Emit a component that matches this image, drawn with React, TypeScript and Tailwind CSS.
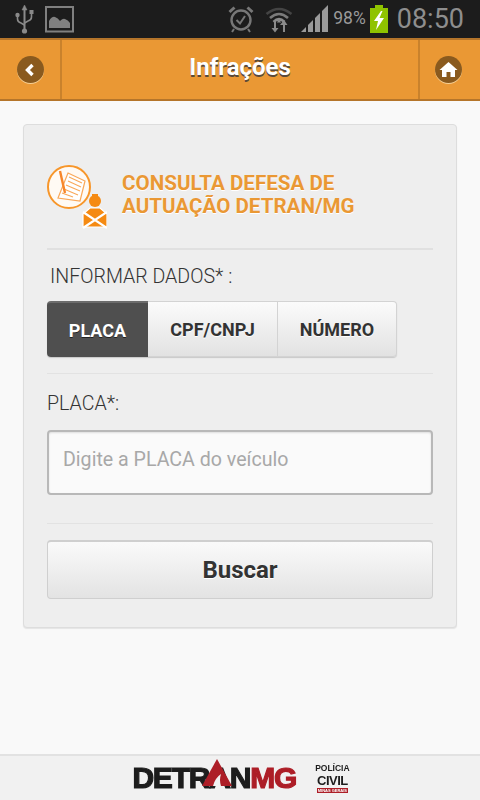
import React from "react";

const roboto = { fontFamily: "Roboto, sans-serif" };

function Usb() {
  return (
    <svg width="20" height="30" viewBox="0 0 20 30" className="shrink-0">
      <g fill="#8a8a8a" stroke="#8a8a8a">
        <path d="M9.5 1 L12 6 H7 Z" strokeWidth="0.5" />
        <path d="M9.5 5 V26" strokeWidth="2" fill="none" />
        <path d="M2.5 11 V15 Q2.5 18 6 19 L9.5 21" strokeWidth="1.6" fill="none" />
        <path d="M16.5 9 V13 Q16.5 16 13 17 L9.5 19" strokeWidth="1.6" fill="none" />
        <circle cx="2.5" cy="11" r="2.2" stroke="none" />
        <rect x="14.5" y="6" width="4" height="4" stroke="none" />
        <circle cx="9.5" cy="27" r="2.6" stroke="none" />
      </g>
    </svg>
  );
}

function Picture() {
  return (
    <svg width="30" height="27" viewBox="0 0 30 27" className="shrink-0">
      <rect x="1" y="1" width="27" height="24.5" fill="none" stroke="#808080" strokeWidth="2" />
      <path d="M4 22 V15 Q7 10 10 11 Q13 12 15 15 Q18 12 20 13 Q23 14 25 17 V22 Z" fill="#808080" />
    </svg>
  );
}

function Alarm() {
  return (
    <svg width="26" height="28" viewBox="0 0 26 28" fill="none" stroke="#777" className="shrink-0">
      <circle cx="13" cy="15" r="9.5" strokeWidth="2.4" />
      <path d="M8.5 15 L12 18.5 L17 11" strokeWidth="2" />
      <path d="M1.5 7 L6.5 2.5 M24.5 7 L19.5 2.5" strokeWidth="3" />
      <path d="M6 24 L4 27 M20 24 L22 27" strokeWidth="2" />
    </svg>
  );
}

function Wifi() {
  return (
    <svg width="28" height="28" viewBox="0 0 28 28" className="shrink-0">
      <g fill="none">
        <path d="M1.5 9 Q14 -1 26.500 9" stroke="#444" strokeWidth="2.6" />
        <path d="M5 13 Q14 5 23 13" stroke="#7a7a7a" strokeWidth="2.6" />
        <path d="M8.500 17 Q14 11.500 19.500 17" stroke="#8a8a8a" strokeWidth="2.6" />
      </g>
      <path d="M14 14.500 L11.800 17.500 H16.200 Z" fill="#8a8a8a" />
      <path d="M9 16 V23 H6.500 L10 27.500 L13.500 23 H11 V16 Z M18 27 V20 H15 L19 15 L22.500 20 H20 V27 Z" fill="#8a8a8a" />
    </svg>
  );
}

function Signal() {
  return (
    <svg width="28" height="28" viewBox="0 0 28 28" className="shrink-0">
      <path d="M0 27 L5 22 V27 Z" fill="#9a9a9a" />
      <path d="M7 20 L12 15 V27 H7 Z" fill="#9a9a9a" />
      <path d="M14 13 L19 8 V27 H14 Z" fill="#9a9a9a" />
      <path d="M21 6 L27 0 V27 H21 Z" fill="#9a9a9a" />
    </svg>
  );
}

function Battery() {
  return (
    <svg width="18" height="28" viewBox="0 0 18 28" className="shrink-0">
      <rect x="5" y="0" width="8" height="3" fill="#8fc300" />
      <rect x="0" y="3" width="18" height="25" fill="#8fc300" />
      <path d="M11 6 L4 16 H8 L6 25 L14 13 H9.500 L12.500 6 Z" fill="#fff" />
    </svg>
  );
}

function RoundBtn({ children }: { children: React.ReactNode }) {
  return (
    <div className="w-[27px] h-[27px] rounded-full bg-[#8a5a1e] shadow-[0_1px_0_#f6cf94] flex items-center justify-center">
      {children}
    </div>
  );
}

function DocIcon() {
  return (
    <svg width="60" height="64" viewBox="0 0 60 64" className="shrink-0 mt-[6px]">
      <circle cx="22" cy="22" r="21" fill="#fffaf4" stroke="#f7962a" strokeWidth="2" />
      <g fill="none" stroke="#f9a85a">
        <path d="M21 8 L38 16 L33 36 L11 33 Z" strokeWidth="1.200" fill="#fff" />
        <path d="M22 12 L35 18 M21 16 L34 22 M19 20 L33 26 M17 24 L31 30 M15 28 L26 32" strokeWidth="1.100" />
      </g>
      <path d="M13 6 L18 28" stroke="#f7862a" strokeWidth="2.400" />
      <circle cx="48" cy="36" r="6" fill="#f58a12" />
      <rect x="45" y="29" width="6" height="3" fill="#f58a12" />
      <path d="M36 49 L43 43 H53 L60 49 V62 H36 Z" fill="#f58a12" stroke="#fff" strokeWidth="1.200" />
      <path d="M36 47 L60 63 M60 47 L36 63" stroke="#fff" strokeWidth="2.200" />
    </svg>
  );
}

function Tab({ children, active, w, last }: { children: React.ReactNode; active?: boolean; w: string; last?: boolean }) {
  return (
    <div
      className={`${w} h-full flex items-center justify-center font-bold text-[18px] ${
        active
          ? "bg-[#4f4f4f] text-white rounded-l-[4px] border-t-2 border-[#6c6c6c] [text-shadow:0_1px_0_#222]"
          : `bg-gradient-to-b from-[#fbfbfb] to-[#e2e2e2] text-[#333] border-y border-[#d3d3d3] border-r [text-shadow:0_1px_0_#fff] ${last ? "rounded-r-[4px]" : ""}`
      }`}
    >
      {children}
    </div>
  );
}

export default function App() {
  return (
    <div className="w-[480px] h-[800px] flex flex-col bg-[#f9f9f9] overflow-hidden" style={roboto}>
      <div className="h-[38px] bg-[#1c1c1c] flex items-center shrink-0 pl-[15px] pr-[16px]">
        <Usb />
        <div className="ml-[10px]"><Picture /></div>
        <div className="ml-auto flex items-center">
          <Alarm />
          <div className="ml-[11px]"><Wifi /></div>
          <div className="ml-[8px]"><Signal /></div>
          <span className="ml-[4px] text-[17.5px] text-[#9a9a9a] leading-none">98%</span>
          <div className="ml-[4px]"><Battery /></div>
          <span className="ml-[9px] text-[27px] text-[#8e8e8e] leading-none">08:50</span>
        </div>
      </div>

      <div className="h-[63px] shrink-0 bg-[#ea9834] border-t-2 border-b-2 border-t-[#b5752a] border-b-[#b5752a] flex items-stretch">
        <div className="w-[62px] border-r-2 border-[#c9822c] flex items-center justify-center shrink-0">
          <RoundBtn>
            <svg width="16" height="16" viewBox="0 0 16 16">
              <path d="M10.500 3 L5.500 8 L10.500 13" fill="none" stroke="#fff" strokeWidth="3.400" />
            </svg>
          </RoundBtn>
        </div>
        <div className="flex-1 flex items-center justify-center text-white font-bold text-[24px] pb-[5px] [text-shadow:0_2px_0_#5a4a3a]">
          Infrações
        </div>
        <div className="w-[62px] border-l-2 border-[#c9822c] flex items-center justify-center shrink-0 pr-[3px]">
          <RoundBtn>
            <svg width="19" height="17" viewBox="0 0 19 17">
              <path d="M9.500 1 L18.500 9 H16 V16 H11.500 V11 H7.500 V16 H3 V9 H0.500 Z" fill="#fff" />
            </svg>
          </RoundBtn>
        </div>
      </div>

      <div className="flex-1 px-[23px] pt-[23px]">
        <div className="h-[504px] bg-[#eeeeee] border border-[#dddddd] rounded-[4px] px-[23px] shadow-[0_1px_1px_#e4e4e4]">
          <div className="flex items-center h-[125px] border-b-2 border-[#e0e0e0] pt-[14px]">
            <DocIcon />
            <div className="ml-[15px] mt-[2px] text-[#ea9834] font-bold text-[20.6px] leading-[23px] [text-shadow:0_1px_0_#fff]">
              CONSULTA DEFESA DE
              <br />
              AUTUAÇÃO DETRAN/MG
            </div>
          </div>
          <div className="pl-[3px] mt-[15px] text-[19.6px] leading-[24px] text-[#333] font-light">INFORMAR DADOS* :</div>
          <div className="mt-[12px] h-[56px] flex w-[350px] rounded-[4px] shadow-[0_1px_1px_#c8c8c8]">
            <Tab active w="w-[101px]">PLACA</Tab>
            <Tab w="w-[130px]">CPF/CNPJ</Tab>
            <Tab w="w-[119px]" last>NÚMERO</Tab>
          </div>
          <div className="mt-[16px] border-t border-[#e2e2e2]" />
          <div className="mt-[18px] text-[19.6px] leading-[24px] text-[#333] font-light">PLACA*:</div>
          <div className="mt-[14px] h-[65px] bg-[#fafafa] border-2 border-[#b8b8b8] rounded-[4px] flex items-center pl-[14px] pb-[6px] text-[19.6px] text-[#a8a8a8] shadow-[inset_0_1px_2px_#ddd]">
            Digite a PLACA do veículo
          </div>
          <div className="mt-[28px] border-t border-[#e2e2e2]" />
          <div className="mt-[16px] h-[59px] bg-gradient-to-b from-[#fafafa] to-[#e3e3e3] border border-[#cfcfcf] border-t-2 rounded-[4px] flex items-center justify-center font-bold text-[24px] text-[#333] [text-shadow:0_1px_0_#fff]">
            Buscar
          </div>
        </div>
      </div>

      <div className="h-[46px] shrink-0 bg-[#f1f1f1] border-t-2 border-[#e2e2e2] flex items-center justify-center [filter:blur(0.5px)]">
        <div className="flex items-center ml-[2px]">
          <div className="relative font-black text-[30px] leading-none tracking-[-1.2px] text-[#1d1d1d]" style={{ fontFamily: '"Liberation Sans", sans-serif', fontWeight: 900, WebkitTextStroke: "1.2px currentColor" }}>
            DETRAN<span className="text-[#ad1e27]">MG</span>
            <svg width="30" height="27" viewBox="0 0 30 27" className="absolute left-[70px] top-[-4px]">
              <path d="M15 0 L30 27 H0 Z" fill="#ad1e27" />
              <path d="M11 27 Q13 19 19 15 Q17 21 19 27 Z" fill="#f1f1f1" />
            </svg>
          </div>
          <div className="ml-[19px] flex flex-col items-center text-[#1d1d1d]" style={{ fontFamily: '"Liberation Sans", sans-serif' }}>
            <span className="text-[8.5px] leading-[10px] font-bold">POLÍCIA</span>
            <span className="text-[13px] leading-[15px] font-bold tracking-[-0.5px]">CIVIL</span>
            <span className="text-[4px] leading-[5px] font-bold bg-[#ad1e27] text-white px-[1px]">MINAS GERAIS</span>
          </div>
        </div>
      </div>
    </div>
  );
}
